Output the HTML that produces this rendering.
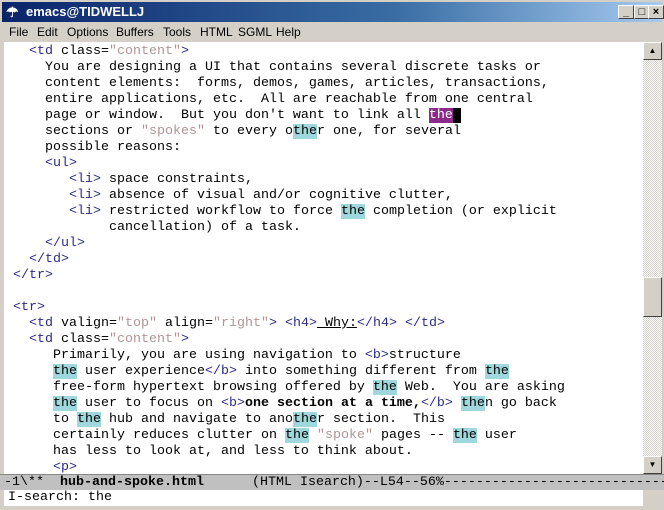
<!DOCTYPE html>
<html><head><style>
*{margin:0;padding:0;box-sizing:border-box}
body{width:664px;height:510px;overflow:hidden;background:#d4d0c8;font-family:"Liberation Sans",sans-serif;position:relative}
.title{position:absolute;left:0;top:0;width:664px;height:22px;background:linear-gradient(90deg,#0a246a 0%,#3a6ea5 60%,#a6caf0 100%);border:2px solid #d4d0c8;border-bottom:none}
.title span{position:absolute;left:24px;top:2px;color:#fff;font-weight:bold;font-size:13px}
.btn{position:absolute;top:3px;width:16px;height:14px;background:#d4d0c8;border:1px solid;border-color:#fff #404040 #404040 #fff;font-size:11px;font-weight:bold;text-align:center;line-height:12px;color:#000}
.menu{position:absolute;left:0;top:22px;height:20px;width:664px;font-size:12px}
.menu span{position:absolute;top:3px}
.text{position:absolute;left:4px;top:42px;width:639px;height:432px;background:#fff;overflow:hidden}
pre{font-family:"Liberation Mono",monospace;font-size:13.33px;line-height:16px;position:absolute;left:9px;top:2px;color:#000;white-space:pre}
.t{color:#2c2c88}.s{color:#b09494}.h{background:#9fd8dc}.c{background:#8a2b8a;color:#fff}
.sb{position:absolute;left:643px;top:42px;width:19px;height:432px;background:repeating-conic-gradient(#d4d0c8 0 25%,#fff 0 50%) 0 0/2px 2px}
.arr{position:absolute;left:0;width:19px;height:18px;background:#d4d0c8;border:1px solid;border-color:#fff #404040 #404040 #fff;font-size:8px;text-align:center;line-height:16px}
.mode{position:absolute;left:0;top:474px;width:664px;height:16px;background:#c0c0c0;border-top:1px solid #888;overflow:hidden}
.mode pre,.mini pre{left:4px;top:0}
.mini{position:absolute;left:4px;top:490px;width:639px;height:16px;background:#fff;overflow:hidden}
</style></head><body>
<div class="title"><span style="left:4px;font-size:14px">&#x2602;</span><span>emacs@TIDWELLJ</span>
<div class="btn" style="left:616px">_</div><div class="btn" style="left:632px">□</div><div class="btn" style="left:646px">×</div></div>
<div class="menu"><span style="left:9px">File</span><span style="left:37px">Edit</span><span style="left:67px">Options</span><span style="left:116px">Buffers</span><span style="left:163px">Tools</span><span style="left:200px">HTML</span><span style="left:238px">SGML</span><span style="left:276px">Help</span></div>
<div class="text"><pre>  <span class="t">&lt;td</span> class=<span class="s">"content"</span><span class="t">&gt;</span>
    You are designing a UI that contains several discrete tasks or
    content elements:  forms, demos, games, articles, transactions,
    entire applications, etc.  All are reachable from one central
    page or window.  But you don't want to link all <span class="c">the</span><span style="background:#000"> </span>
    sections or <span class="s">"spokes"</span> to every o<span class="h">the</span>r one, for several
    possible reasons:
    <span class="t">&lt;ul&gt;</span>
       <span class="t">&lt;li&gt;</span> space constraints,
       <span class="t">&lt;li&gt;</span> absence of visual and/or cognitive clutter,
       <span class="t">&lt;li&gt;</span> restricted workflow to force <span class="h">the</span> completion (or explicit
            cancellation) of a task.
    <span class="t">&lt;/ul&gt;</span>
  <span class="t">&lt;/td&gt;</span>
<span class="t">&lt;/tr&gt;</span>

<span class="t">&lt;tr&gt;</span>
  <span class="t">&lt;td</span> valign=<span class="s">"top"</span> align=<span class="s">"right"</span><span class="t">&gt;</span> <span class="t">&lt;h4&gt;</span><u> Why:</u><span class="t">&lt;/h4&gt;</span> <span class="t">&lt;/td&gt;</span>
  <span class="t">&lt;td</span> class=<span class="s">"content"</span><span class="t">&gt;</span>
     Primarily, you are using navigation to <span class="t">&lt;b&gt;</span>structure
     <span class="h">the</span> user experience<span class="t">&lt;/b&gt;</span> into something different from <span class="h">the</span>
     free-form hypertext browsing offered by <span class="h">the</span> Web.  You are asking
     <span class="h">the</span> user to focus on <span class="t">&lt;b&gt;</span><b>one section at a time,</b><span class="t">&lt;/b&gt;</span> <span class="h">the</span>n go back
     to <span class="h">the</span> hub and navigate to ano<span class="h">the</span>r section.  This
     certainly reduces clutter on <span class="h">the</span> <span class="s">"spoke"</span> pages -- <span class="h">the</span> user
     has less to look at, and less to think about.
     <span class="t">&lt;p&gt;</span></pre></div>
<div class="sb"><div class="arr" style="top:0">▲</div><div class="arr" style="top:235px;height:40px"></div><div class="arr" style="top:414px">▼</div></div>
<div class="mode"><pre>-1\**  <b>hub-and-spoke.html</b>      (HTML Isearch)--L54--56%----------------------------------------</pre></div>
<div class="mini"><pre style="left:4px">I-search: the</pre></div>
</body></html>
